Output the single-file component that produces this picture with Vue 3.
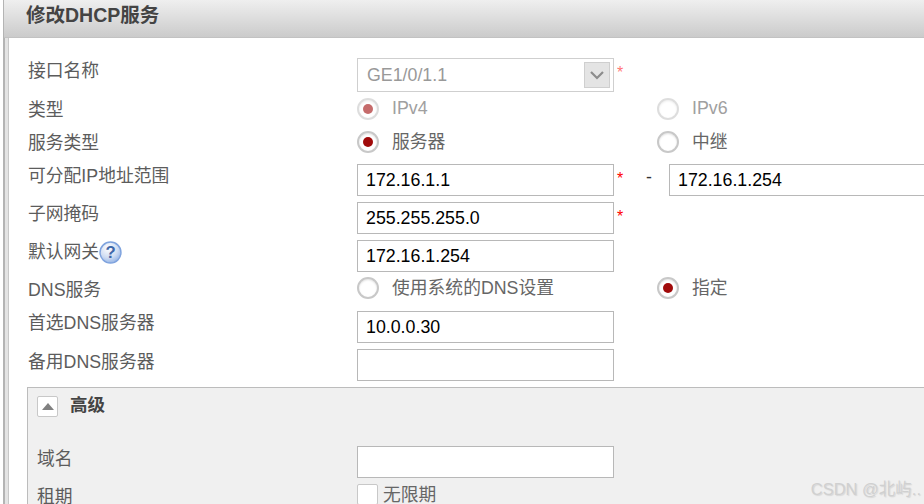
<script setup>
</script>

<template>
  <div class="page">
    <div class="shell">
      <header class="title">修改DHCP服务</header>
      <main class="panel">
        <div class="row h34">
          <label class="lab top2">接口名称</label>
          <div class="select">
            <span>GE1/0/1.1</span>
            <span class="arrow">
              <svg width="16" height="10" viewBox="0 0 16 10"><path d="M2 2 L8 8 L14 2" fill="none" stroke="#8c8c8c" stroke-width="2.2" /></svg>
            </span>
          </div>
          <span class="req faded">*</span>
        </div>

        <div class="row h33 mid">
          <label class="lab shift1">类型</label>
          <div class="radio disabled"><i class="dot on"></i><span>IPv4</span></div>
          <div class="radio disabled"><i class="dot"></i><span>IPv6</span></div>
        </div>

        <div class="row h33 mid">
          <label class="lab shift1">服务类型</label>
          <div class="radio"><i class="dot on"></i><span class="cjk">服务器</span></div>
          <div class="radio"><i class="dot"></i><span class="cjk">中继</span></div>
        </div>

        <div class="row gap6">
          <label class="lab">可分配IP地址范围</label>
          <input class="field" value="172.16.1.1" readonly />
          <span class="req">*</span>
          <span class="dash">-</span>
          <input class="field wide" value="172.16.1.254" readonly />
        </div>

        <div class="row gap6">
          <label class="lab">子网掩码</label>
          <input class="field" value="255.255.255.0" readonly />
          <span class="req">*</span>
        </div>

        <div class="row gap6">
          <label class="lab">默认网关
            <svg class="help" width="23" height="23" viewBox="0 0 22 22">
              <defs>
                <radialGradient id="hg" cx="40%" cy="30%" r="75%">
                  <stop offset="0" stop-color="#ffffff" />
                  <stop offset="0.6" stop-color="#cfdcf2" />
                  <stop offset="1" stop-color="#8fb0e4" />
                </radialGradient>
              </defs>
              <circle cx="11" cy="11" r="10" fill="url(#hg)" stroke="#7fa3de" stroke-width="1.4" />
              <text x="11" y="16.5" text-anchor="middle" class="qm">?</text>
            </svg>
          </label>
          <input class="field" value="172.16.1.254" readonly />
        </div>

        <div class="row h32 mid">
          <label class="lab shift2">DNS服务</label>
          <div class="radio"><i class="dot"></i><span class="cjk">使用系统的DNS设置</span></div>
          <div class="radio"><i class="dot on"></i><span class="cjk">指定</span></div>
        </div>

        <div class="row gap7">
          <label class="lab">首选DNS服务器</label>
          <input class="field" value="10.0.0.30" readonly />
        </div>

        <div class="row gap6">
          <label class="lab top2">备用DNS服务器</label>
          <input class="field" value="" readonly />
        </div>

        <section class="advanced">
          <div class="adv-head">
            <span class="toggle"><i class="tri"></i></span>
            <strong>高级</strong>
          </div>
          <div class="adv-row">
            <label class="lab adv-lab">域名</label>
            <input class="field" value="" readonly />
          </div>
          <div class="adv-row lease">
            <label class="lab adv-lab">租期</label>
            <i class="check"></i>
            <span class="check-text">无限期</span>
          </div>
        </section>
      </main>
    </div>
    <div class="watermark">CSDN @北屿..</div>
  </div>
</template>

<style>
html, body { margin: 0; padding: 0; background: #fff; overflow: hidden; }
</style>

<style scoped>
.page {
  position: relative;
  width: 924px;
  height: 504px;
  overflow: hidden;
  background: #fff;
  font-family: "Liberation Sans", "Noto Sans CJK SC", sans-serif;
  font-size: 17.8px;
  color: #5c5c5c;
}
.shell {
  margin-left: 3px;
  width: 921px;
  height: 504px;
  border-left: 2px solid #b4b4b4;
  background: #e4e4e4;
  box-sizing: border-box;
}
.title {
  height: 38px;
  box-sizing: border-box;
  margin-left: -1px;
  padding: 4px 0 0 22px;
  line-height: 22px;
  font-size: 19.5px;
  font-weight: 700;
  color: #444;
  background: linear-gradient(#efefef, #cbcbcb);
  border-bottom: 1px solid #c2c2c2;
}
.panel {
  margin-left: 3px;
  height: 466px;
  box-sizing: border-box;
  padding: 20px 0 0 19px;
  background: #fff;
  border-left: 1px solid #c8c8c8;
}
.row {
  display: flex;
  align-items: flex-start;
  height: 32px;
}
.h34 { height: 34px; }
.h33 { height: 33px; }
.h32 { height: 32px; }
.gap6 { margin-top: 6px; }
.gap7 { margin-top: 7px; }
.mid { align-items: center; }
.lab {
  display: flex;
  align-items: center;
  flex: 0 0 329px;
  height: 22px;
  margin-top: 1px;
  line-height: 22px;
  white-space: nowrap;
}
.lab.top2 { margin-top: 2px; }
.mid .lab { margin-top: 0; }
.shift1 { position: relative; top: 1px; }
.shift2 { position: relative; top: 2px; }
.help { margin-left: 0; }
.qm { font: 700 16px "Liberation Sans", sans-serif; fill: #3f67a8; }
.field {
  display: block;
  flex: 0 0 257px;
  width: 257px;
  height: 32px;
  box-sizing: border-box;
  margin: 0;
  padding: 0 8px;
  border: 1px solid #b8b8b8;
  border-radius: 0;
  outline: none;
  background: #fff;
  color: #000;
  font: 17.8px "Liberation Sans", sans-serif;
}
.field.wide { flex: 0 0 300px; width: 300px; }
.select {
  display: flex;
  align-items: center;
  justify-content: space-between;
  flex: 0 0 257px;
  height: 34px;
  box-sizing: border-box;
  padding: 0 3px 0 9px;
  border: 1px solid #cfcfcf;
  color: #999;
}
.arrow {
  display: flex;
  align-items: center;
  justify-content: center;
  width: 26px;
  height: 26px;
  box-sizing: border-box;
  border: 1px solid #cfcfcf;
  background: #e4e4e4;
}
.req {
  flex: none;
  width: 12px;
  margin: 5px 0 0 3px;
  color: #f00;
  font-size: 16px;
  line-height: 20px;
}
.req.faded { opacity: 0.55; }
.dash {
  flex: none;
  width: 40px;
  text-align: center;
  color: #333;
  line-height: 26px;
}
.radio {
  display: flex;
  align-items: center;
  flex: 0 0 300px;
  color: #666;
}
.radio span { margin-left: 13px; white-space: nowrap; }
.radio .cjk { margin-bottom: 4px; }
.radio.disabled { color: #a0a0a0; }
.radio.disabled .dot { opacity: 0.6; }
.dot {
  display: flex;
  align-items: center;
  justify-content: center;
  width: 22px;
  height: 22px;
  box-sizing: border-box;
  border-radius: 50%;
  border: 2px solid #c8c8c8;
  box-shadow: inset 0 1px 2px rgba(0, 0, 0, 0.12);
  background: #fff;
  flex: none;
}
.dot.on::after {
  content: "";
  width: 10px;
  height: 10px;
  border-radius: 50%;
  background: #a00a0a;
}
.advanced {
  margin: 6px 0 0 -1px;
  height: 130px;
  width: 920px;
  box-sizing: border-box;
  border: 1px solid #bcbcbc;
  background: #f0f0f0;
  padding-left: 9px;
}
.adv-head {
  display: flex;
  align-items: center;
  height: 34px;
  color: #444;
}
.adv-head strong { margin: 0 0 3px 12px; font-size: 17.5px; font-weight: 700; }
.toggle {
  display: flex;
  align-items: center;
  justify-content: center;
  width: 21px;
  height: 21px;
  box-sizing: border-box;
  margin-top: 2px;
  border: 1px solid #c8c8c8;
  border-radius: 2px;
  background: #fff;
}
.tri {
  width: 0;
  height: 0;
  border-left: 6px solid transparent;
  border-right: 6px solid transparent;
  border-bottom: 7px solid #808080;
}
.adv-row {
  display: flex;
  align-items: flex-start;
  margin-top: 24px;
  height: 32px;
}
.adv-lab { flex-basis: 320px; margin-top: 2px; }
.lease { margin-top: 6px; }
.check {
  width: 21px;
  height: 21px;
  box-sizing: border-box;
  border: 1px solid #c8c8c8;
  border-radius: 2px;
  background: #fff;
  flex: none;
}
.check-text { margin-left: 5px; line-height: 22px; color: #666; }
.watermark {
  position: absolute;
  right: 3px;
  bottom: 4px;
  font-size: 16.5px;
  line-height: 22px;
  color: #d0d0d0;
  text-shadow: 1px 1px 1px rgba(120, 120, 120, 0.2);
}
</style>
